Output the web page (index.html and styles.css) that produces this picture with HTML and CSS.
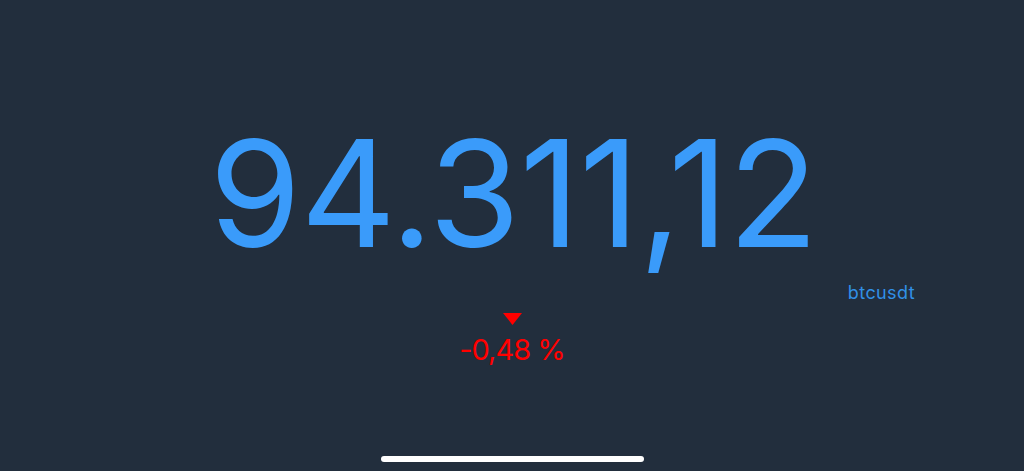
FILE: index.html
```html
<!DOCTYPE html>
<html lang="de">
<head>
<meta charset="utf-8">
<title>btcusdt</title>
<link rel="stylesheet" href="styles.css">
</head>
<body>
<main class="screen">
  <section class="quote">
    <div class="price">94.311,12</div>
    <div class="symbol">btcusdt</div>
  </section>
  <section class="change">
    <svg class="arrow" width="19" height="12" viewBox="0 0 19 12" aria-hidden="true"><polygon points="0,0 19,0 9.5,12" /></svg>
    <div class="percent">-0,48 %</div>
  </section>
  <div class="home-indicator"></div>
</main>
</body>
</html>
```
FILE: styles.css
```css
html, body {
  margin: 0;
  padding: 0;
  background: #222e3d;
}
body {
  font-family: Inter, "Noto Sans", "Liberation Sans", sans-serif;
  overflow: hidden;
}
.screen {
  height: 471px;
  display: flex;
  flex-direction: column;
  align-items: center;
  padding-top: 120px;
  box-sizing: border-box;
}
.quote {
  width: 806px;
  display: flex;
  flex-direction: column;
}
.price {
  text-align: center;
  font-size: 148px;
  line-height: 148px;
  color: #3a9bfa;
  padding-left: 3px;
  letter-spacing: -0.5px;
}
.symbol {
  text-align: right;
  font-size: 18px;
  line-height: 20px;
  color: #3190e6;
  margin-top: 15px;
  letter-spacing: 0.4px;
}
.change {
  display: flex;
  flex-direction: column;
  align-items: center;
  margin-top: 10px;
}
.arrow {
  display: block;
  fill: #ff0000;
}
.percent {
  font-size: 29px;
  line-height: 36px;
  color: #ff0000;
  margin-top: 7px;
  letter-spacing: -1px;
}
.home-indicator {
  margin-top: auto;
  margin-bottom: 9px;
  width: 263px;
  height: 6px;
  border-radius: 3px;
  background: #ffffff;
}
```
